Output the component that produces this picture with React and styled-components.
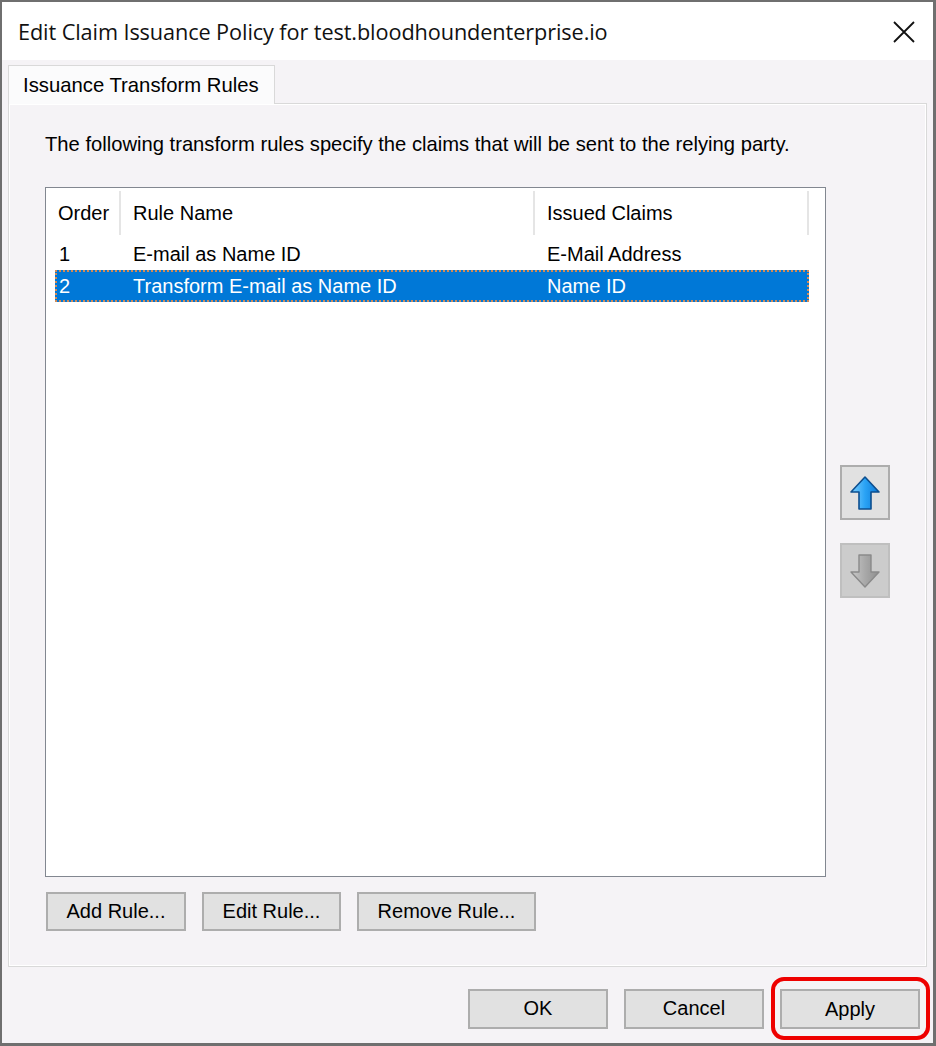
import React from "react";
import styled, { createGlobalStyle } from "styled-components";

const GlobalStyle = createGlobalStyle`
  html, body {
    margin: 0;
    padding: 0;
    background: #ffffff;
  }
  * {
    box-sizing: border-box;
  }
`;

const rules = [
  { order: "1", name: "E-mail as Name ID", claims: "E-Mail Address" },
  { order: "2", name: "Transform E-mail as Name ID", claims: "Name ID", selected: true },
];

const App = () => {
  return (
    <>
      <GlobalStyle />
      <Window>
        <TitleBar>
          <Title>Edit Claim Issuance Policy for test.bloodhoundenterprise.io</Title>
          <CloseButton aria-label="Close">
            <svg width="24" height="24" viewBox="0 0 24 24">
              <path d="M2 2 L22 22 M22 2 L2 22" stroke="#111" strokeWidth="1.8" fill="none" />
            </svg>
          </CloseButton>
        </TitleBar>
        <Body>
          <TabStrip>
            <Tab>Issuance Transform Rules</Tab>
          </TabStrip>
          <TabPanel>
            <Description>
              The following transform rules specify the claims that will be sent to the relying party.
            </Description>
            <ListRow>
              <ListBox>
                <HeaderRow>
                  <HeaderCell $w={66} $first>Order</HeaderCell>
                  <HeaderCell $w={414}>Rule Name</HeaderCell>
                  <HeaderCell $w={274}>Issued Claims</HeaderCell>
                </HeaderRow>
                {rules.map((r) => (
                  <Row key={r.order} $selected={r.selected}>
                    <Cell $w={66} $first>{r.order}</Cell>
                    <Cell $w={414}>{r.name}</Cell>
                    <Cell $w={273}>{r.claims}</Cell>
                  </Row>
                ))}
              </ListBox>
              <ArrowColumn>
                <ArrowButton aria-label="Move up">
                  <svg width="34" height="38" viewBox="0 0 34 38">
                    <defs>
                      <linearGradient id="upg" x1="0" y1="0" x2="1" y2="0">
                        <stop offset="0" stopColor="#7fd0ff" />
                        <stop offset="0.5" stopColor="#2aa3f5" />
                        <stop offset="1" stopColor="#0a78d6" />
                      </linearGradient>
                    </defs>
                    <path
                      d="M17 3 L31 18 L23 18 L23 35 L11 35 L11 18 L3 18 Z"
                      fill="url(#upg)"
                      stroke="#0d4f8f"
                      strokeWidth="1.6"
                      strokeLinejoin="round"
                    />
                  </svg>
                </ArrowButton>
                <ArrowButton $disabled aria-label="Move down">
                  <svg width="34" height="38" viewBox="0 0 34 38">
                    <defs>
                      <linearGradient id="dng" x1="0" y1="0" x2="1" y2="0">
                        <stop offset="0" stopColor="#c9c9c9" />
                        <stop offset="0.5" stopColor="#a9a9a9" />
                        <stop offset="1" stopColor="#8e8e8e" />
                      </linearGradient>
                    </defs>
                    <path
                      d="M11 3 L23 3 L23 20 L31 20 L17 35 L3 20 L11 20 Z"
                      fill="url(#dng)"
                      stroke="#8a8a8a"
                      strokeWidth="1.4"
                      strokeLinejoin="round"
                    />
                  </svg>
                </ArrowButton>
              </ArrowColumn>
            </ListRow>
            <RuleButtons>
              <Button $w={140}>Add Rule...</Button>
              <Button $w={139}>Edit Rule...</Button>
              <Button $w={179}>Remove Rule...</Button>
            </RuleButtons>
          </TabPanel>
          <Footer>
            <Button $w={140} $h={40}>OK</Button>
            <Button $w={140} $h={40}>Cancel</Button>
            <Highlight>
              <Button $w={140} $h={40}>Apply</Button>
            </Highlight>
          </Footer>
        </Body>
      </Window>
    </>
  );
};

export default App;

const font = `"Liberation Sans", Arial, sans-serif`;

const Window = styled.div`
  width: 936px;
  height: 1046px;
  border: 3px solid #6f6f6f;
  border-top-width: 2px;
  border-left-width: 2px;
  background: #f5f3f6;
  display: flex;
  flex-direction: column;
  font-family: ${font};
  color: #000;
`;

const TitleBar = styled.div`
  height: 58px;
  flex: none;
  background: #ffffff;
  display: flex;
  align-items: center;
  justify-content: space-between;
  padding: 0 17px 0 16px;
`;

const Title = styled.div`
  font-family: "Open Sans", "Noto Sans", sans-serif;
  font-size: 21.7px;
  letter-spacing: -0.1px;
  color: #111;
  margin-top: 1px;
`;

const CloseButton = styled.div`
  display: flex;
  align-items: center;
  margin-top: 1px;
`;

const Body = styled.div`
  flex: 1;
  display: flex;
  flex-direction: column;
  padding: 5px 7px 0 6px;
`;

const TabStrip = styled.div`
  display: flex;
  height: 38px;
`;

const Tab = styled.div`
  width: 267px;
  height: 39px;
  background: #fbfbfc;
  border: 1px solid #d9d9d9;
  border-bottom: none;
  display: flex;
  align-items: center;
  padding-left: 14px;
  font-size: 20.3px;
  position: relative;
  z-index: 1;
`;

const TabPanel = styled.div`
  width: 919px;
  height: 864px;
  border: 1px solid #d9d9d9;
  box-shadow: inset 1px 1px 0 #ffffff, inset -1px -1px 0 #ffffff;
  background: #f5f3f6;
  padding: 28px 0 0 36px;
  display: flex;
  flex-direction: column;
`;

const Description = styled.div`
  font-size: 20.2px;
  line-height: 24px;
  margin-bottom: 31px;
`;

const ListRow = styled.div`
  display: flex;
  gap: 14px;
`;

const ListBox = styled.div`
  width: 781px;
  height: 690px;
  background: #ffffff;
  border: 1px solid #828790;
  padding: 3px 0 0 9px;
  display: flex;
  flex-direction: column;
`;

const HeaderRow = styled.div`
  display: flex;
  height: 44px;
  align-items: stretch;
  margin-bottom: 3px;
`;

const HeaderCell = styled.div`
  width: ${(p) => p.$w}px;
  display: flex;
  align-items: center;
  padding-left: ${(p) => (p.$first ? 3 : 12)}px;
  font-size: 20px;
  white-space: nowrap;
  border-right: 2px solid #e5e5e5;
`;

const Row = styled.div`
  display: flex;
  height: 32px;
  width: 754px;
  align-items: center;
  font-size: 20px;
  background: ${(p) => (p.$selected ? "#0078d7" : "transparent")};
  color: ${(p) => (p.$selected ? "#ffffff" : "#000")};
  outline: ${(p) => (p.$selected ? "2px dotted #d48a55" : "none")};
  outline-offset: -2px;
`;

const Cell = styled.div`
  width: ${(p) => p.$w}px;
  padding-left: ${(p) => (p.$first ? 4 : 12)}px;
  white-space: nowrap;
`;

const ArrowColumn = styled.div`
  display: flex;
  flex-direction: column;
  gap: 23px;
  padding-top: 278px;
`;

const ArrowButton = styled.div`
  width: 50px;
  height: 55px;
  border: 2px solid ${(p) => (p.$disabled ? "#bfbfbf" : "#adadad")};
  background: ${(p) => (p.$disabled ? "#cccccc" : "#e1e1e1")};
  display: flex;
  align-items: center;
  justify-content: center;
`;

const RuleButtons = styled.div`
  display: flex;
  gap: 16px;
  margin-top: 15px;
  padding-left: 1px;
`;

const Button = styled.div`
  width: ${(p) => p.$w}px;
  height: ${(p) => p.$h || 39}px;
  background: #e1e1e1;
  border: 2px solid #adadad;
  display: flex;
  align-items: center;
  justify-content: center;
  font-size: 20px;
  color: #000;
`;

const Footer = styled.div`
  display: flex;
  justify-content: flex-end;
  align-items: center;
  gap: 16px;
  padding: 10px 6px 0 0;
`;

const Highlight = styled.div`
  border: 4px solid #ee0000;
  border-radius: 13px;
  padding: 8px 6px 7px 5px;
  margin: 0 -10px 0 -9px;
`;
